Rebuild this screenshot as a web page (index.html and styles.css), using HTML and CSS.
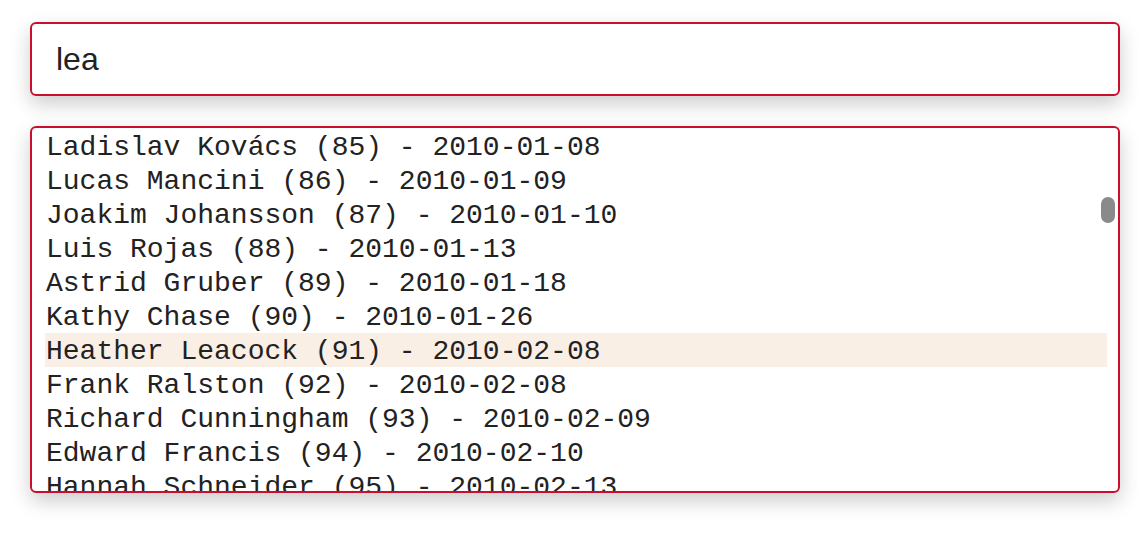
FILE: index.html
```html
<!DOCTYPE html>
<html lang="en">
<head>
<meta charset="utf-8">
<title>Search</title>
<link rel="stylesheet" href="styles.css">
</head>
<body>
<div class="page">
  <div class="field">
    <input class="search" type="text" value="lea">
  </div>
  <div class="results">
    <div class="viewport">
      <ul class="list">
        <li class="row">Ladislav Kovács (85) - 2010-01-08</li>
        <li class="row">Lucas Mancini (86) - 2010-01-09</li>
        <li class="row">Joakim Johansson (87) - 2010-01-10</li>
        <li class="row">Luis Rojas (88) - 2010-01-13</li>
        <li class="row">Astrid Gruber (89) - 2010-01-18</li>
        <li class="row">Kathy Chase (90) - 2010-01-26</li>
        <li class="row active">Heather Leacock (91) - 2010-02-08</li>
        <li class="row">Frank Ralston (92) - 2010-02-08</li>
        <li class="row">Richard Cunningham (93) - 2010-02-09</li>
        <li class="row">Edward Francis (94) - 2010-02-10</li>
        <li class="row">Hannah Schneider (95) - 2010-02-13</li>
      </ul>
    </div>
    <div class="thumb"></div>
  </div>
</div>
</body>
</html>
```

FILE: styles.css
```css
html, body {
  margin: 0;
  padding: 0;
  background: #ffffff;
}

.page {
  display: flex;
  flex-direction: column;
  gap: 30px;
  padding: 22px 27px 41px 30px;
}

.field {
  width: 1090px;
  height: 74px;
  border-radius: 6px;
  box-shadow: 0 8px 20px rgba(0, 0, 0, 0.2);
}

.search {
  display: block;
  box-sizing: border-box;
  width: 100%;
  height: 100%;
  margin: 0;
  padding: 0 24px;
  border: 2px solid #c8102e;
  border-radius: 6px;
  background: #ffffff;
  font-family: "Liberation Sans", Arial, sans-serif;
  font-size: 32px;
  color: #222222;
  outline: none;
}

.results {
  position: relative;
  width: 1090px;
  height: 367px;
  border-radius: 6px;
  box-shadow: 0 8px 20px rgba(0, 0, 0, 0.2);
}

.viewport {
  box-sizing: border-box;
  height: 100%;
  border: 2px solid #c8102e;
  border-radius: 6px;
  background: #ffffff;
  overflow: hidden;
}

.list {
  list-style: none;
  margin: 0;
  padding: 1px 11px 0 13px;
}

.row {
  height: 34px;
  line-height: 37px;
  padding-left: 1px;
  font-family: "Liberation Mono", "Courier New", monospace;
  font-size: 28px;
  color: #222222;
  white-space: nowrap;
}

.row.active {
  background: #faefe5;
}

.thumb {
  position: absolute;
  top: 71px;
  right: 5px;
  width: 14px;
  height: 26px;
  border-radius: 7px;
  background: #8a8a8a;
}
```
